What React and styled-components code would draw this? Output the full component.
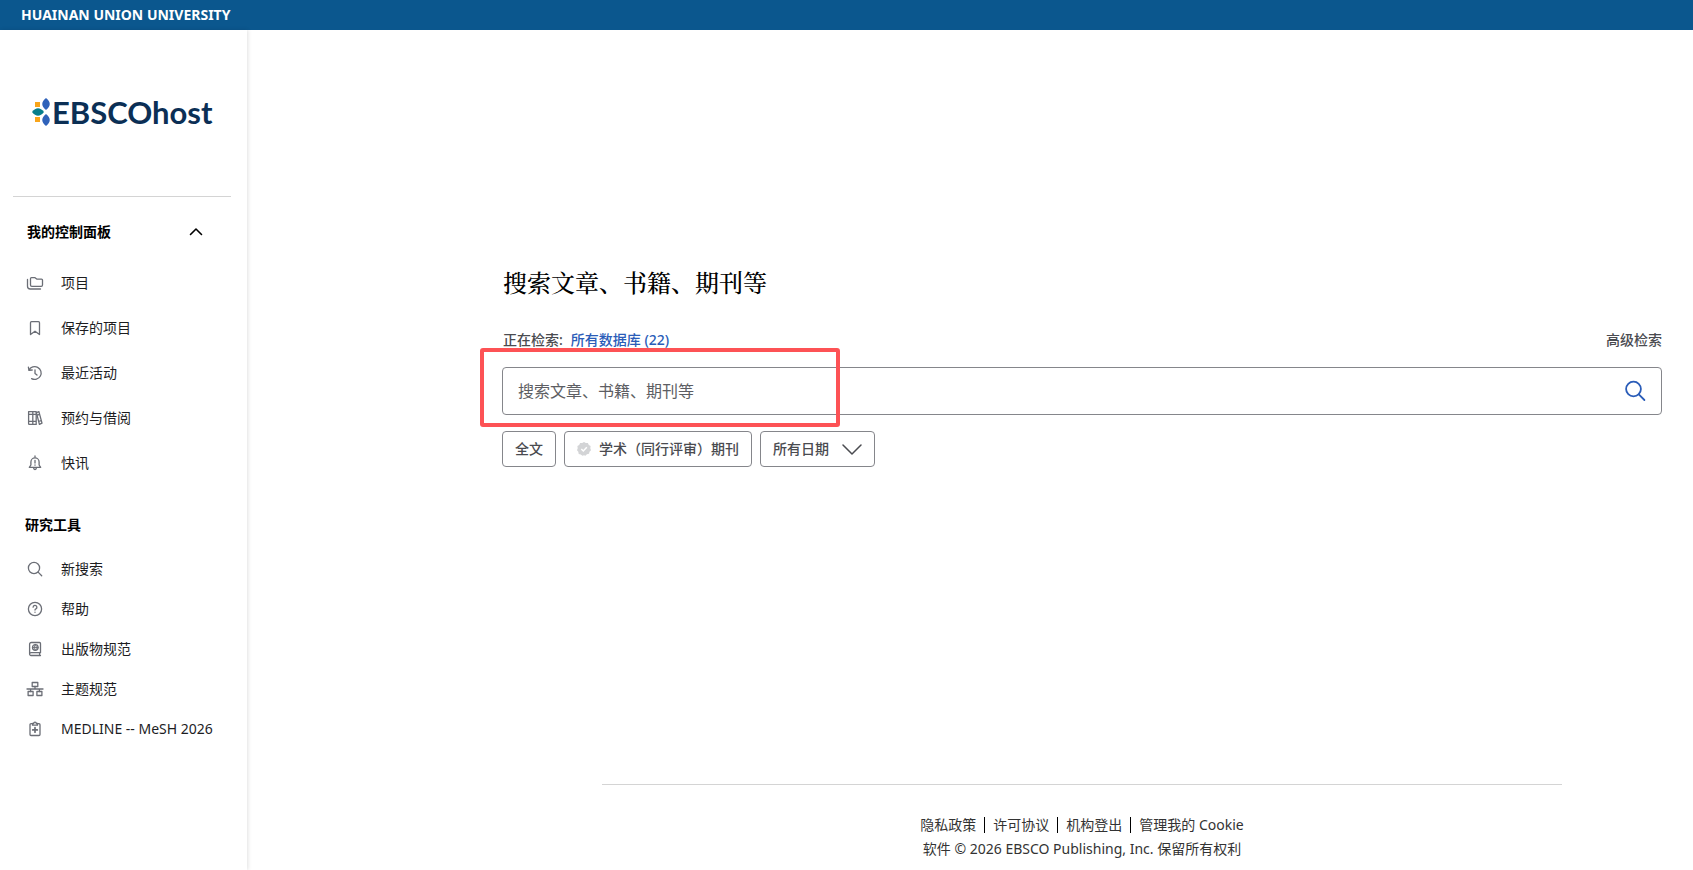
import React, { useState } from 'react';
import styled, { createGlobalStyle } from 'styled-components';

const GlobalStyle = createGlobalStyle`
  * {
    box-sizing: border-box;
  }

  body {
    margin: 0;
    background: #fff;
    color: #1d1d1f;
    font-family: 'Noto Sans', 'Noto Sans CJK SC', sans-serif;
    font-size: 14px;
    line-height: 20px;
  }

  a {
    color: inherit;
    text-decoration: none;
  }

  button, input {
    font: inherit;
  }
`;

const Page = styled.div`
  display: flex;
  flex-direction: column;
  min-height: 100vh;
`;

const TopBar = styled.header`
  padding: 5px 21px;
  background: #0b578e;
  color: #fff;
  font-weight: 700;
`;

const Body = styled.div`
  display: flex;
  flex: 1;
`;

const Sidebar = styled.aside`
  width: 247px;
  flex-shrink: 0;
  padding: 0 16px 0 13px;
  box-shadow: 1px 0 4px rgba(0, 0, 0, 0.12);
`;

const LogoArea = styled.a`
  display: flex;
  align-items: center;
  height: 167px;
  padding: 0 0 2px 19px;
  border-bottom: 1px solid #d4d4d4;
  color: #0b2f55;
  font-family: Lato, sans-serif;
  font-size: 31px;
  font-weight: 700;
  line-height: 32px;
`;

const SectionToggle = styled.button`
  display: flex;
  align-items: center;
  justify-content: space-between;
  width: 100%;
  height: 40px;
  margin: 15px 0 8px;
  padding: 0 28px 0 14px;
  border: 0;
  background: none;
  color: #000;
  font-weight: 700;
  cursor: pointer;
`;

const SectionTitle = styled.h2`
  margin: 30px 0 14px;
  padding-left: 12px;
  color: #000;
  font-size: 14px;
  font-weight: 700;
  line-height: 20px;
`;

const MenuList = styled.ul`
  margin: 0;
  padding: 0;
  list-style: none;
`;

const MenuLink = styled.a`
  display: flex;
  align-items: center;
  gap: 17px;
  height: ${props => props.$altura}px;
  padding-left: 13px;
  white-space: nowrap;
`;

const Glyph = styled.svg`
  flex-shrink: 0;
  fill: none;
  stroke: ${props => props.$cor || '#6b6e76'};
  stroke-width: ${props => props.$traco || 1.3};
  stroke-linecap: round;
  stroke-linejoin: round;
`;

const Main = styled.main`
  display: flex;
  flex: 1;
  flex-direction: column;
  min-width: 0;
  padding: 232px 31px 9px 255px;
`;

const Title = styled.h1`
  margin: 0;
  padding-left: 1px;
  color: #000;
  font-family: 'Noto Serif CJK SC', 'Liberation Serif', 'Noto Sans CJK SC', serif;
  font-size: 24px;
  font-weight: 500;
  line-height: 40px;
`;

const SearchInfo = styled.div`
  display: flex;
  justify-content: space-between;
  margin: 28px 0 17px;
  padding-left: 1px;
  color: #4a4b50;
  font-weight: 500;
`;

const DatabaseLink = styled.a`
  margin-left: 8px;
  color: #2a5cb8;
`;

const SearchBox = styled.form`
  position: relative;
  display: flex;
  align-items: center;
  height: 48px;
  border: 1px solid #85868b;
  border-radius: 4px;
`;

const SearchInput = styled.input`
  flex: 1;
  min-width: 0;
  height: 46px;
  padding: 0 15px;
  border: 0;
  background: none;
  outline: none;
  font-size: 16px;

  &::placeholder {
    color: #5d5e63;
    opacity: 1;
  }
`;

const SearchButton = styled.button`
  display: flex;
  padding: 0 14px;
  border: 0;
  background: none;
  cursor: pointer;
`;

const Highlight = styled.div`
  position: absolute;
  top: -20px;
  left: -23px;
  width: 360px;
  height: 79px;
  border: 4px solid #fd5255;
  border-radius: 3px;
  pointer-events: none;
`;

const Filters = styled.div`
  display: flex;
  gap: 8px;
  margin-top: 16px;
`;

const FilterButton = styled.button`
  display: flex;
  align-items: center;
  gap: ${props => props.$gap || 8}px;
  height: 36px;
  padding: 0 12px;
  border: 1px solid #85868b;
  border-radius: 4px;
  background: #fff;
  color: #4a4b50;
  font-weight: 500;
  cursor: pointer;
`;

const Footer = styled.footer`
  width: 100%;
  max-width: 960px;
  margin: auto auto 0;
  padding-top: 28px;
  border-top: 1px solid #d4d4d4;
  color: #333;
  line-height: 24px;
  text-align: center;
`;

const FooterLinks = styled.nav`
  display: flex;
  align-items: center;
  justify-content: center;
  height: 24px;
`;

const FooterLink = styled.a`
  padding: 0 8px;
  line-height: 16px;

  & + & {
    border-left: 1px solid #000;
  }
`;

const icons = {
  projects: (
    <>
      <path d="M4.5 11V4.6a1 1 0 0 1 1-1h3.2l2 1.5h4.8a1 1 0 0 1 1 1V11a1.3 1.3 0 0 1-1.3 1.3H5.8A1.3 1.3 0 0 1 4.5 11z" />
      <path d="M1.5 5.5v6.8a2.7 2.7 0 0 0 2.7 2.7h10.3" />
    </>
  ),
  bookmark: <path d="M4.5 3.7a1 1 0 0 1 1-1h7a1 1 0 0 1 1 1v11.8L9 12.2l-4.5 3.3z" />,
  history: (
    <>
      <path d="M3 6.2A6.4 6.4 0 1 1 5.6 14.6M2.4 3.2l.5 3.2 3.3-.4" />
      <path d="M9 5.8v3.7l2 1.6" />
    </>
  ),
  books: (
    <>
      <path d="M2.6 2.6h4.2v12.8H3.4a.8.8 0 0 1-.8-.8zM6.8 2.6h3.4v12.8H6.8M2.6 5.4h7.6M2.6 12.3h7.6" />
      <path d="M10.4 3.6l2.5-1 3.1 11.6-2.6 1.2zM11.2 6.2l2.4-.9M12.6 12.5l2.5-.9" />
    </>
  ),
  bell: (
    <>
      <path d="M9 2v1.2M4.9 11V8a4.1 4.1 0 0 1 8.2 0v3l1.6 2.3H3.3zM7.7 14.6a1.4 1.4 0 0 0 2.6 0" />
      <path d="M9 6.3v2.8M9 11v.2" />
    </>
  ),
  search: (
    <>
      <circle cx="8" cy="8" r="5.6" />
      <path d="M12.1 12.1l3.6 3.6" />
    </>
  ),
  help: (
    <>
      <circle cx="9" cy="9" r="6.6" />
      <path d="M7.1 7.2a1.9 1.9 0 1 1 2.8 1.7c-.6.3-.9.6-.9 1.2M9 12.2v.1" />
    </>
  ),
  publications: (
    <>
      <path d="M14.5 12.7H5a1.4 1.4 0 0 0 0 2.8h9.5M3.6 14V4.2a1.7 1.7 0 0 1 1.7-1.7h8.2a1 1 0 0 1 1 1v9.2M13.6 12.8v2.6" />
      <circle cx="9.3" cy="7.5" r="2.8" />
      <path d="M6.5 7.5h5.6M9.3 4.7c-1.5 1.7-1.5 3.9 0 5.6 1.5-1.7 1.5-3.9 0-5.6z" strokeWidth="0.9" />
    </>
  ),
  subjects: (
    <>
      <path d="M6.2 2.5h5.6v4H6.2zM2.1 11.5h5v4h-5zM10.9 11.5h5v4h-5z" />
      <path d="M1 9h16M9 6.5V9M4.6 9v2.5M13.4 9v2.5" />
    </>
  ),
  medical: (
    <>
      <path d="M6.3 3.7H5a1 1 0 0 0-1 1v9.8a1 1 0 0 0 1 1h8a1 1 0 0 0 1-1V4.7a1 1 0 0 0-1-1h-1.3" />
      <path d="M6.5 3.5h1.2a1.3 1.3 0 0 1 2.6 0h1.2v1.7h-5z" />
      <path d="M9 7.6v4.6M6.7 9.9h4.6" strokeWidth="1.7" />
    </>
  ),
};

const dashboardItems = [
  { icon: 'projects', label: '项目' },
  { icon: 'bookmark', label: '保存的项目' },
  { icon: 'history', label: '最近活动' },
  { icon: 'books', label: '预约与借阅' },
  { icon: 'bell', label: '快讯' },
];

const toolItems = [
  { icon: 'search', label: '新搜索' },
  { icon: 'help', label: '帮助' },
  { icon: 'publications', label: '出版物规范' },
  { icon: 'subjects', label: '主题规范' },
  { icon: 'medical', label: 'MEDLINE -- MeSH 2026' },
];

const footerItems = ['隐私政策', '许可协议', '机构登出', '管理我的 Cookie'];

const LogoMark = () => (
  <svg width="20" height="28" viewBox="0 0 20 28" aria-hidden="true">
    <path d="M3 4h5v5H3zM3 19h5v5H3z" fill="#f9a51a" />
    <path d="M14 0c5 4 5 8 0 12-5-4-5-8 0-12zM14 16c5 4 5 8 0 12-5-4-5-8 0-12z" fill="#2f62ba" />
    <path d="M0 14c4-5 8-5 12 0-4 5-8 5-12 0z" fill="#067e8c" />
  </svg>
);

const Menu = ({ items, altura }) => (
  <MenuList>
    {items.map(item => (
      <li key={item.label}>
        <MenuLink href="#" $altura={altura}>
          <Glyph width="18" height="18" viewBox="0 0 18 18" aria-hidden="true">
            {icons[item.icon]}
          </Glyph>
          {item.label}
        </MenuLink>
      </li>
    ))}
  </MenuList>
);

const App = () => {
  const [open, setOpen] = useState(true);
  const [query, setQuery] = useState('');

  return (
    <Page>
      <GlobalStyle />
      <TopBar>HUAINAN UNION UNIVERSITY</TopBar>
      <Body>
        <Sidebar>
          <LogoArea href="#">
            <LogoMark />
            EBSCOhost
          </LogoArea>
          <SectionToggle type="button" aria-expanded={open} onClick={() => setOpen(!open)}>
            我的控制面板
            <Glyph width="14" height="14" viewBox="0 0 14 14" $cor="#000" $traco={1.6} aria-hidden="true">
              <path d={open ? 'M1.5 9.5L7 4l5.5 5.5' : 'M1.5 4L7 9.5 12.5 4'} />
            </Glyph>
          </SectionToggle>
          {open && <Menu items={dashboardItems} altura={45} />}
          <SectionTitle>研究工具</SectionTitle>
          <Menu items={toolItems} altura={40} />
        </Sidebar>

        <Main>
          <Title>搜索文章、书籍、期刊等</Title>
          <SearchInfo>
            <span>
              正在检索:
              <DatabaseLink href="#">所有数据库 (22)</DatabaseLink>
            </span>
            <a href="#">高级检索</a>
          </SearchInfo>
          <SearchBox onSubmit={e => e.preventDefault()}>
            <SearchInput
              type="text"
              aria-label="搜索文章、书籍、期刊等"
              placeholder="搜索文章、书籍、期刊等"
              value={query}
              onChange={e => setQuery(e.target.value)}
            />
            <SearchButton type="submit" aria-label="搜索">
              <Glyph width="24" height="24" viewBox="0 0 24 24" $cor="#2a5cb8" $traco={1.8} aria-hidden="true">
                <circle cx="10.5" cy="10" r="7.4" />
                <path d="M15.8 15.4l5.6 5.6" />
              </Glyph>
            </SearchButton>
            <Highlight />
          </SearchBox>
          <Filters>
            <FilterButton type="button">全文</FilterButton>
            <FilterButton type="button">
              <svg width="14" height="14" viewBox="0 0 14 14" aria-hidden="true">
                <path
                  d="M7 0l1.8 1.1 2.1-.1.9 1.9 1.8 1.2-.3 2.1.7 2-1.5 1.5-.5 2.1-2.1.5L8.4 13.7 7 13.3l-1.6.5-1.6-1.4-2.1-.5-.4-2.1L0 8.2l.7-2L.4 4.100l1.800-1.200.900-1.900 2.100.1z"
                  fill="#d3d4d6"
                />
                <path d="M4.3 7l2 2 3.5-3.700" fill="none" stroke="#fff" strokeWidth="1.5" />
              </svg>
              学术（同行评审）期刊
            </FilterButton>
            <FilterButton type="button" $gap={13}>
              所有日期
              <Glyph width="20" height="20" viewBox="0 0 20 20" $cor="#4a4b50" $traco={1.5} aria-hidden="true">
                <path d="M1 6l9 9 9-9" />
              </Glyph>
            </FilterButton>
          </Filters>

          <Footer>
            <FooterLinks>
              {footerItems.map(item => (
                <FooterLink key={item} href="#">{item}</FooterLink>
              ))}
            </FooterLinks>
            <div>软件 © 2026 EBSCO Publishing, Inc. 保留所有权利</div>
          </Footer>
        </Main>
      </Body>
    </Page>
  );
};

export default App;
